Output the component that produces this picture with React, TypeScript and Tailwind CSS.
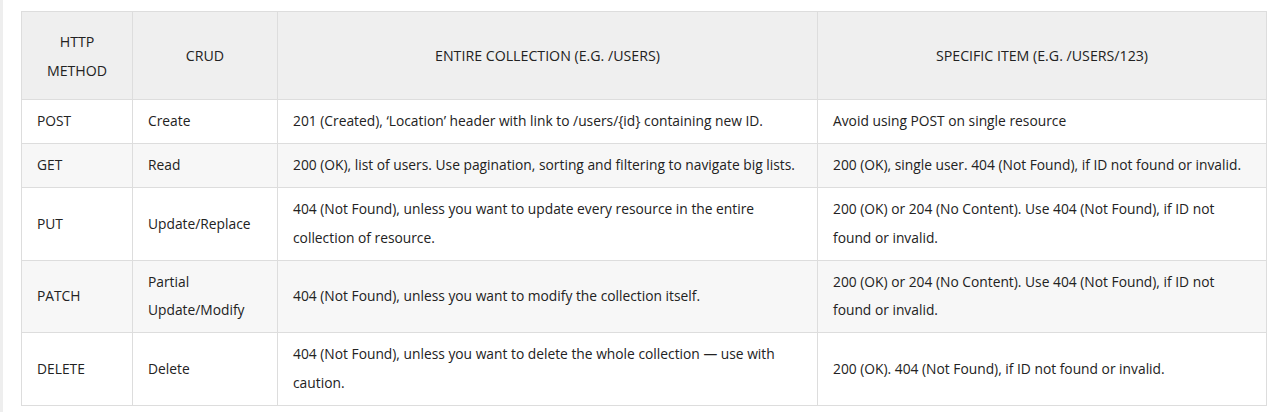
import React from "react";

const rows: [string, React.ReactNode, string, string][] = [
  ["POST", "Create", "201 (Created), ‘Location’ header with link to /users/{id} containing new ID.", "Avoid using POST on single resource"],
  ["GET", "Read", "200 (OK), list of users. Use pagination, sorting and filtering to navigate big lists.", "200 (OK), single user. 404 (Not Found), if ID not found or invalid."],
  ["PUT", "Update/Replace", "404 (Not Found), unless you want to update every resource in the entire collection of resource.", "200 (OK) or 204 (No Content). Use 404 (Not Found), if ID not found or invalid."],
  ["PATCH", "Partial Update/Modify", "404 (Not Found), unless you want to modify the collection itself.", "200 (OK) or 204 (No Content). Use 404 (Not Found), if ID not found or invalid."],
  ["DELETE", "Delete", "404 (Not Found), unless you want to delete the whole collection — use with caution.", "200 (OK). 404 (Not Found), if ID not found or invalid."],
];

export default function App() {
  return (
    <div
      className="flex h-[412px] w-[1280px] bg-white text-[#222] overflow-hidden"
      style={{ fontFamily: '"Open Sans", "Noto Sans", sans-serif' }}
    >
      <div className="w-[3px] bg-[#eeeeee]" />
      <div className="pl-[18px] pt-[11px]">
        <table className="table-fixed border-collapse w-[1245px] text-[13.8px]">
          <colgroup>
            <col className="w-[111px]" />
            <col className="w-[145px]" />
            <col className="w-[540px]" />
            <col className="w-[449px]" />
          </colgroup>
          <thead>
            <tr className="bg-[#efefef] h-[88px]">
              {["HTTP METHOD", "CRUD", "ENTIRE COLLECTION (E.G. /USERS)", "SPECIFIC ITEM (E.G. /USERS/123)"].map((h) => (
                <th
                  key={h}
                  className="border border-[#dddddd] px-[15px] text-center font-normal uppercase leading-[29px] text-[14.2px] text-[#222]"
                >
                  {h}
                </th>
              ))}
            </tr>
          </thead>
          <tbody>
            {rows.map((r, i) => (
              <tr key={r[0]} className={i % 2 === 1 ? "bg-[#f7f7f7]" : "bg-white"}>
                {r.map((c, j) => (
                  <td
                    key={j}
                    className="border border-[#dddddd] px-[15px] py-[7.25px] leading-[28.5px] align-middle"
                  >
                    {c}
                  </td>
                ))}
              </tr>
            ))}
          </tbody>
        </table>
      </div>
    </div>
  );
}
